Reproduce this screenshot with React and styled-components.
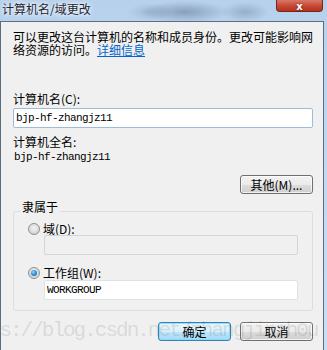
import React from "react";
import styled, { createGlobalStyle } from "styled-components";

const Global = createGlobalStyle`
  html, body { margin: 0; padding: 0; }
  body { width: 327px; height: 350px; overflow: hidden; background: #c6dbf0; }
`;

const cjk = `"Noto Sans CJK SC", "Noto Sans", sans-serif`;
const mono = `"Liberation Mono", "DejaVu Sans Mono", monospace`;

const Window = styled.div`
  position: relative;
  width: 327px;
  height: 350px;
  display: flex;
  flex-direction: column;
  overflow: hidden;
  background:
    radial-gradient(ellipse 45px 11px at 185px 12px, rgba(90,110,140,0.5), transparent),
    radial-gradient(ellipse 24px 10px at 245px 12px, rgba(100,120,150,0.4), transparent),
    radial-gradient(ellipse 22px 9px at 150px 12px, rgba(120,140,170,0.35), transparent),
    linear-gradient(180deg, #b7d1ec 0%, #c4daf1 60%, #cadff3 100%);
  font-family: ${cjk};
`;

const TitleBar = styled.div`
  height: 21px;
  flex: none;
  display: flex;
  align-items: flex-start;
  justify-content: space-between;
`;

const Title = styled.div`
  font-size: 12px;
  line-height: 13px;
  padding: 2px 0 0 2px;
  color: #1d2733;
  text-shadow: 0 0 6px #fff, 0 0 3px #fff;
`;

const CloseButton = styled.div`
  width: 47px;
  height: 12px;
  margin-right: 4px;
  box-sizing: border-box;
  border: 1px solid #6e2a1c;
  border-top: none;
  border-radius: 0 0 4px 4px;
  background: linear-gradient(180deg, #d9786a 0%, #c74a35 50%, #b7311b 100%);
  display: flex;
  justify-content: center;
  align-items: flex-end;
  color: #fff;
  font-family: "DejaVu Sans", sans-serif;
  font-weight: bold;
  font-size: 10px;
  line-height: 9px;
  text-shadow: 0 0 2px #5a1a10;
`;

const Body = styled.div`
  flex: 1;
  margin-right: 3px;
  border: 1px solid #5c6e82;
  border-bottom: none;
  background: #f0f0f0;
  padding: 8px 10px 0 12px;
  display: flex;
  flex-direction: column;
  color: #000;
`;

const Para = styled.div`
  font-size: 12px;
  line-height: 13px;
  white-space: nowrap;
`;

const Link = styled.a`
  color: #0066cc;
  text-decoration: underline;
`;

const Label = styled.div`
  font-size: 12px;
  line-height: 13px;
  margin-top: ${(p) => p.$mt || 0}px;
`;

const Value = styled.div`
  font-family: ${mono};
  font-size: 11px;
  letter-spacing: -0.6px;
  line-height: 13px;
  margin-top: ${(p) => p.$mt || 0}px;
  padding-left: 1px;
`;

const TextBox = styled.input`
  display: block;
  box-sizing: border-box;
  width: ${(p) => p.$w}px;
  height: 20px;
  margin: ${(p) => p.$mt || 0}px 0 0 0;
  padding: 0 2px;
  border: 1px solid ${(p) => p.$border};
  border-radius: 2px;
  background: ${(p) => p.$bg};
  font-family: ${mono};
  font-size: 11px;
  letter-spacing: -0.6px;
  color: #000;
  outline: none;
`;

const Row = styled.div`
  display: flex;
  justify-content: flex-end;
  gap: 9px;
  margin-top: ${(p) => p.$mt || 0}px;
`;

const Button = styled.div`
  box-sizing: border-box;
  width: 73px;
  height: 19px;
  border: 1px solid ${(p) => (p.$default ? "#3c7fb1" : "#707070")};
  border-radius: 3px;
  background: ${(p) =>
    p.$default
      ? "linear-gradient(180deg, #eaf6fd 0%, #d9f0fc 50%, #bee6fd 51%, #a7d9f5 100%)"
      : "linear-gradient(180deg, #f2f2f2 0%, #ebebeb 50%, #dddddd 51%, #cfcfcf 100%)"};
  box-shadow: inset 0 0 0 1px ${(p) => (p.$default ? "rgba(120,220,255,0.8)" : "rgba(255,255,255,0.7)")};
  font-size: 12px;
  line-height: 17px;
  text-align: center;
  color: #000;
`;

const Group = styled.div`
  position: relative;
  margin-top: 17px;
  height: 100px;
  box-sizing: border-box;
  border: 1px solid #d5dfe5;
  border-radius: 3px;
  padding: 10px 14px 0 14px;
  display: flex;
  flex-direction: column;
`;

const Legend = styled.div`
  position: absolute;
  top: -12px;
  left: 6px;
  padding: 0 2px;
  background: #f0f0f0;
  font-size: 12px;
  line-height: 13px;
`;

const RadioRow = styled.div`
  display: flex;
  align-items: center;
  gap: 3px;
  font-size: 12px;
  line-height: 13px;
  margin-top: ${(p) => p.$mt || 0}px;
`;

const Radio = styled.span`
  position: relative;
  width: 12px;
  height: 12px;
  box-sizing: border-box;
  border-radius: 50%;
  border: 1px solid #8e8f8f;
  background: radial-gradient(circle at 50% 40%, #f4f4f4 0%, #d6d6d6 70%, #c8c8c8 100%);
  flex: none;
  &::after {
    content: "";
    display: ${(p) => (p.$checked ? "block" : "none")};
    position: absolute;
    left: 2px;
    top: 2px;
    width: 6px;
    height: 6px;
    border-radius: 50%;
    background: radial-gradient(circle at 40% 35%, #8fd3ff 0%, #2a8ad4 55%, #0d4c8c 100%);
  }
`;

const Indent = styled.div`
  padding-left: 16px;
`;

const Watermark = styled.div`
  position: absolute;
  left: -43px;
  top: 318px;
  font-family: ${mono};
  font-size: 21px;
  letter-spacing: -2px;
  line-height: 26px;
  color: rgba(60, 60, 60, 0.14);
  white-space: nowrap;
  pointer-events: none;
`;

export default function App() {
  return (
    <>
      <Global />
      <Window>
        <TitleBar>
          <Title>计算机名/域更改</Title>
          <CloseButton>x</CloseButton>
        </TitleBar>
        <Body>
          <Para>
            可以更改这台计算机的名称和成员身份。更改可能影响网
            <br />
            络资源的访问。<Link href="#">详细信息</Link>
          </Para>
          <Label $mt={36}>计算机名(C):</Label>
          <TextBox $mt={3} $w={300} $border="#9dbcd9" $bg="#fff" readOnly value="bjp-hf-zhangjz11" />
          <Label $mt={7}>计算机全名:</Label>
          <Value $mt={3}>bjp-hf-zhangjz11</Value>
          <Row $mt={11}>
            <Button>其他(M)...</Button>
          </Row>
          <Group>
            <Legend>隶属于</Legend>
            <RadioRow>
              <Radio />
              <span>域(D):</span>
            </RadioRow>
            <Indent>
              <TextBox $w={254} $border="#cfd5da" $bg="#f0f0f0" readOnly value="" />
            </Indent>
            <RadioRow $mt={11}>
              <Radio $checked />
              <span>工作组(W):</span>
            </RadioRow>
            <Indent>
              <TextBox $mt={1} $w={254} $border="#dbe3ea" $bg="#fff" readOnly value="WORKGROUP" />
            </Indent>
          </Group>
          <Row $mt={11}>
            <Button $default>确定</Button>
            <Button>取消</Button>
          </Row>
        </Body>
        <Watermark>https://blog.csdn.net/zhangjinzh0u</Watermark>
      </Window>
    </>
  );
}
